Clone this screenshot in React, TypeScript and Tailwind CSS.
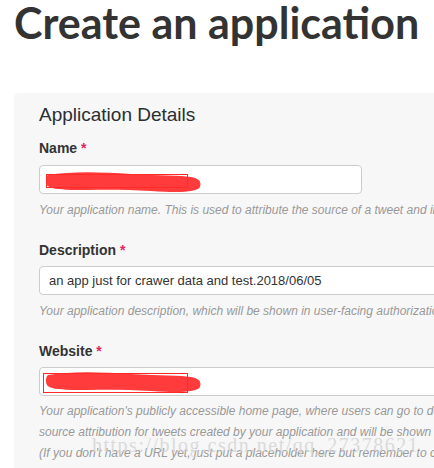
import React from "react";

function Scribble({ rect }: { rect: { x: number; y: number; w: number; h: number } }) {
  return (
    <svg className="pointer-events-none absolute left-0 top-0" width="200" height="40" viewBox="0 0 200 40">
      <path
        d="M7 8 C30 4 60 5 90 7 C120 9 140 8 150 10 C157 11 161 14 159 20 C156 25 140 26 110 24 C80 22 50 23 30 23 C18 22 8 22 6 18 C4 14 5 10 7 8 Z"
        fill="#ff3b3b"
      />
      <rect x={rect.x} y={rect.y} width={rect.w} height={rect.h} fill="none" stroke="#ff2a2a" strokeWidth="1" />
    </svg>
  );
}

export default function App() {
  return (
    <div className="relative h-[468px] w-[434px] overflow-hidden bg-white font-['Liberation_Sans',Arial,sans-serif]">
      <h1 className="pl-[14px] font-['Lato',sans-serif] text-[43px] font-bold leading-[46px] text-[#333]">
        Create an application
      </h1>
      <div className="ml-[14px] mt-[47px] w-[640px] rounded-tl-[5px] bg-[#f7f7f7] pb-[20px] pl-[25px] pt-[10px]">
        <h2 className="text-[19px] leading-[24px] text-[#292f33]">Application Details</h2>

        <div className="mt-[12px]">
          <label className="block text-[14px] font-bold leading-[18px] text-[#333]">
            Name <span className="text-[#e0245e]">*</span>
          </label>
          <div className="relative mt-[8px] h-[29px] w-[323px] rounded-[4px] border border-[#ccc] bg-white">
            <div className="absolute left-[1px] top-[1px]">
              <Scribble rect={{ x: 5.5, y: 7.5, w: 141, h: 13 }} />
            </div>
          </div>
          <p className="mt-[8px] whitespace-nowrap text-[12px] italic leading-[17px] text-[#999]">
            Your application name. This is used to attribute the source of a tweet and in user-facing authorization screens.
          </p>
        </div>

        <div className="mt-[22px]">
          <label className="block text-[14px] font-bold leading-[18px] text-[#333]">
            Description <span className="text-[#e0245e]">*</span>
          </label>
          <div className="mt-[7px] flex h-[29px] w-[600px] items-center rounded-[4px] border border-[#ccc] bg-white pl-[9px] text-[13px] text-[#333]">
            an app just for crawer data and test.2018/06/05
          </div>
          <p className="mt-[8px] whitespace-nowrap text-[12px] italic leading-[17px] text-[#999]">
            Your application description, which will be shown in user-facing authorization screens. Between 10 and 200 characters max.
          </p>
        </div>

        <div className="mt-[22px]">
          <label className="block text-[14px] font-bold leading-[18px] text-[#333]">
            Website <span className="text-[#e0245e]">*</span>
          </label>
          <div className="relative mt-[7px] h-[29px] w-[600px] rounded-[4px] border border-[#ccc] bg-white">
            <div className="absolute left-[1px] top-[-1px]">
              <Scribble rect={{ x: 2.5, y: 6.5, w: 144, h: 19 }} />
            </div>
          </div>
          <div className="mt-[5px] whitespace-nowrap text-[12px] italic leading-[21px] text-[#999]">
            <p>Your application's publicly accessible home page, where users can go to download, make use of, or find out more information about your application.</p>
            <p>source attribution for tweets created by your application and will be shown in user-facing authorization screens.</p>
            <p>(If you don't have a URL yet, just put a placeholder here but remember to change it later.)</p>
          </div>
        </div>
      </div>
      <div className="pointer-events-none absolute left-[92px] top-[430px] font-['Liberation_Serif',serif] text-[20px] tracking-[1.5px] text-[#d4d4d4] opacity-80">
        https://blog.csdn.net/qq_27378621
      </div>
    </div>
  );
}
